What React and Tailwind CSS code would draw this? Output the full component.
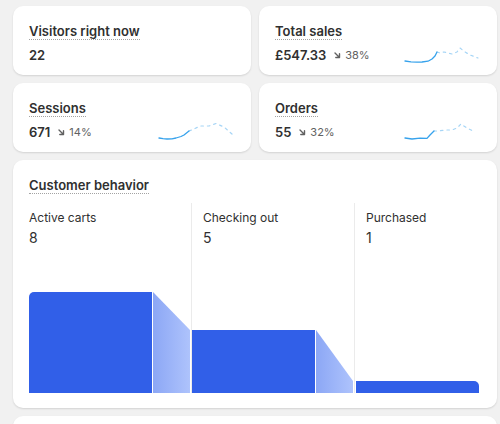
// Analytics overview — metric cards + customer behavior funnel
import React from "react";

const metrics = [
  {
    title: "Visitors right now",
    value: "22",
  },
  {
    title: "Total sales",
    value: "£547.33",
    change: "38%",
    solid: "2,16 8,16.8 14,17.2 19,17 25,16.2 29,14 32,11 34,7",
    dashed: "34,7 37,8 41,7 49,9 54,7 57,3 62,7 67,10 75,13",
  },
  {
    title: "Sessions",
    value: "671",
    change: "14%",
    solid: "2,16 6,16.7 10,17 15,16.8 19,16 24,14.5 27,13 32,9",
    dashed: "32,9 37,7 43,4 52,4 59,1.5 67,5 75,12",
  },
  {
    title: "Orders",
    value: "55",
    change: "32%",
    solid: "2,16 9,17 17,16.2 24,16.4 27,13 31,9",
    dashed: "31,9 35,9 42,8 49,8 54,6 58,2 64,6 72,10",
  },
];

const funnel = [
  { label: "Active carts", value: "8", height: 101, drop: 38, width: "w-[162px]", first: true },
  { label: "Checking out", value: "5", height: 63, drop: 51, width: "w-[163px]" },
  { label: "Purchased", value: "1", height: 12, width: "flex-1", last: true },
];

const DownArrow = () => (
  <svg width="7" height="7" viewBox="0 0 7 7" fill="none" className="shrink-0">
    <path d="M1 1L5.5 5.5M5.5 1.8V5.5H1.8" stroke="#616161" strokeWidth="1.4" strokeLinecap="round" strokeLinejoin="round" />
  </svg>
);

const Sparkline = ({ solid, dashed }) => (
  <svg width="76" height="20" viewBox="0 0 76 20" fill="none" className="mr-[2px] shrink-0">
    <polyline points={dashed} stroke="#a6d5f6" strokeWidth="1.2" strokeDasharray="2.5 4" strokeLinecap="round" strokeLinejoin="round" />
    <polyline points={solid} stroke="#36a2ec" strokeWidth="1.3" strokeLinecap="round" strokeLinejoin="round" />
  </svg>
);

const Title = ({ children }) => (
  <h2 className="text-[13px] leading-5 font-semibold text-[#303030]">
    <span className="border-b border-dotted border-[#a3a3a3]">{children}</span>
  </h2>
);

const MetricCard = ({ m }) => (
  <div className="h-[69px] bg-white rounded-[10px] shadow-[0_1px_2px_rgba(0,0,0,0.13)] px-4 pt-[15px]">
    <Title>{m.title}</Title>
    <div className="mt-1 h-5 flex items-center justify-between">
      <div className="flex items-center">
        <span className="text-[13px] leading-5 font-semibold text-[#303030]">{m.value}</span>
        {m.change && (
          <span className="flex items-center gap-[4px] ml-2 text-[11px] text-[#616161]">
            <DownArrow />
            {m.change}
          </span>
        )}
      </div>
      {m.solid && <Sparkline solid={m.solid} dashed={m.dashed} />}
    </div>
  </div>
);

const FunnelColumn = ({ step, gradId }) => (
  <div className={`${step.width} h-[190px] flex flex-col ${step.first ? "" : "border-l border-[#ebebeb]"}`}>
    <div className={`pt-[5px] ${step.first ? "" : "pl-[11px]"}`}>
      <p className="text-[12px] leading-5 text-[#303030]">{step.label}</p>
      <p className="text-[14px] leading-5 text-[#303030]">{step.value}</p>
    </div>
    <div className={`mt-auto flex items-end gap-[1px] ${step.last ? "pl-[1px]" : ""}`}>
      <div
        className={`w-[123px] bg-[#315fe8] ${step.first ? "rounded-tl-[5px]" : ""} ${step.last ? "rounded-tr-[5px]" : ""}`}
        style={{ height: step.height }}
      />
      {!step.last && (
        <svg width="37" height={step.height} viewBox={`0 0 37 ${step.height}`} className="shrink-0">
          <defs>
            <linearGradient id={gradId} x1="0" y1="0" x2="1" y2="0">
              <stop offset="0" stopColor="#8ca7f5" />
              <stop offset="1" stopColor="#aec3fc" />
            </linearGradient>
          </defs>
          <polygon points={`0,0 37,${step.drop} 37,${step.height} 0,${step.height}`} fill={`url(#${gradId})`} />
        </svg>
      )}
    </div>
  </div>
);

export default function App() {
  return (
    <div className="h-[424px] bg-[#f1f1f1] pl-[13px] pr-[3px] pt-[6px] font-['Inter','Noto_Sans',sans-serif] overflow-hidden">
      <div className="grid grid-cols-2 gap-x-[8px] gap-y-[8px]">
        {metrics.map((m) => (
          <MetricCard key={m.title} m={m} />
        ))}
      </div>

      {/* Customer behavior */}
      <div className="mt-[8px] bg-white rounded-[10px] shadow-[0_1px_2px_rgba(0,0,0,0.13)] px-4 pt-[15px] pb-[15px]">
        <Title>Customer behavior</Title>
        <div className="mt-[8px] flex">
          {funnel.map((step, i) => (
            <FunnelColumn key={step.label} step={step} gradId={`drop-${i}`} />
          ))}
        </div>
      </div>

      <div className="mt-[8px] h-[40px] bg-white rounded-[10px] shadow-[0_1px_2px_rgba(0,0,0,0.13)]" />
    </div>
  );
}
